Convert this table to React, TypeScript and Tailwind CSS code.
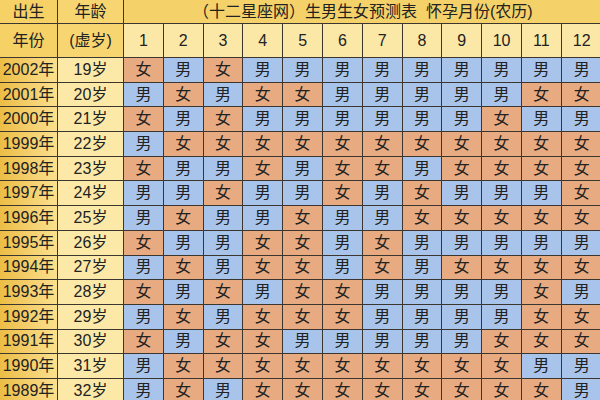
import React from "react";

// birth year, age (虚岁), predicted sex for lunar months 1..12
const rows: [string, string, string][] = [
  ["2002年", "19岁", "女男女男男男男男男男男男"],
  ["2001年", "20岁", "男女男女女男男男男男女女"],
  ["2000年", "21岁", "女男女男男男男男男女男男"],
  ["1999年", "22岁", "男女女女女女女女女女女女"],
  ["1998年", "23岁", "女男男女男女女男女女女女"],
  ["1997年", "24岁", "男男女男男女男女男男男女"],
  ["1996年", "25岁", "男女男男女男男女女女女女"],
  ["1995年", "26岁", "女男男女女男女男男男男男"],
  ["1994年", "27岁", "男女男女女男女男女女女女"],
  ["1993年", "28岁", "女男女男女女男男男男女男"],
  ["1992年", "29岁", "男女男女女女男男男男女女"],
  ["1991年", "30岁", "女男女女男男男男男女女女"],
  ["1990年", "31岁", "男女女女女女女女女女男男"],
  ["1989年", "32岁", "男女男女女女女女女女女男"],
];

const months = Array.from({ length: 12 }, (_, i) => i + 1);

const cell = "flex items-center justify-center border-b border-r border-[#3b3630] leading-none";

export default function App() {
  return (
    <div className="h-[400px] w-[600px] overflow-hidden bg-white font-['Liberation_Sans','Noto_Sans_CJK_SC',sans-serif] text-[16px] text-[#222]">
      <div className="grid grid-cols-[58px_66px_repeat(12,39.8px)]">
        {/* header row 1 */}
        <div className={`${cell} h-[24px] bg-[#f5d166]`}>出生</div>
        <div className={`${cell} h-[24px] bg-[#f7d672]`}>年龄</div>
        <div className={`${cell} col-span-12 h-[24px] border-r-0 bg-[#f5d169]`}>
          （十二星座网）生男生女预测表&nbsp;&nbsp;怀孕月份(农历)
        </div>

        {/* header row 2 */}
        <div className={`${cell} h-[34px] bg-[#f5d166]`}>年份</div>
        <div className={`${cell} h-[34px] bg-[#f7d672]`}>(虚岁)</div>
        {months.map((m) => (
          <div key={m} className={`${cell} h-[34px] bg-[#fce8a6] ${m === 12 ? "border-r-0" : ""}`}>
            {m}
          </div>
        ))}

        {/* data rows */}
        {rows.map(([year, age, sexes]) => (
          <React.Fragment key={year}>
            <div className={`${cell} h-[24.7px] bg-linear-to-r from-[#ecbd45] to-[#fbe08c]`}>{year}</div>
            <div className={`${cell} h-[24.7px] bg-[#fce9a8]`}>{age}</div>
            {Array.from(sexes).map((s, i) => (
              <div
                key={i}
                className={`${cell} h-[24.7px] ${s === "男" ? "bg-[#a9c4ea]" : "bg-[#e8aa80]"} ${i === 11 ? "border-r-0" : ""}`}
              >
                {s}
              </div>
            ))}
          </React.Fragment>
        ))}
      </div>
    </div>
  );
}
